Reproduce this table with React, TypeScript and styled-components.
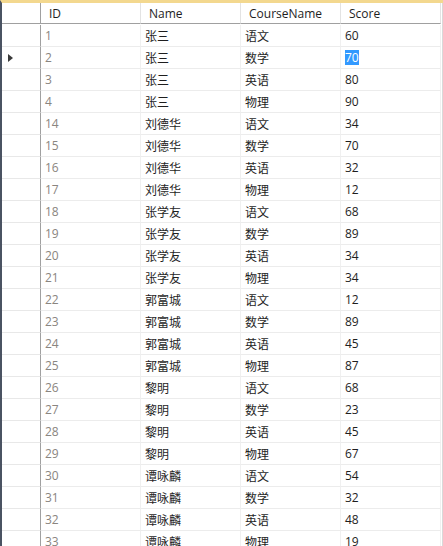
import React from "react";
import styled, { createGlobalStyle } from "styled-components";

const Global = createGlobalStyle`
  html, body { margin: 0; padding: 0; background: #ffffff; }
  body { font-family: "Open Sans", "Noto Sans CJK SC", sans-serif; }
`;

const Frame = styled.div`
  width: 443px;
  height: 546px;
  overflow: hidden;
  box-sizing: border-box;
  border-top: 3px solid #f3d88f;
  border-left: 2px solid #4a5362;
  background: #ffffff;
`;

const Grid = styled.div`
  display: grid;
  grid-template-columns: 39px 100px 100px 100px 100px;
  grid-auto-rows: 22px;
  width: 440px;
  border-right: 1px solid #d9d9d9;
`;

const HeadCorner = styled.div`
  border-right: 1px solid #a0a0a0;
  border-bottom: 1px solid #a0a0a0;
  height: 21px;
  box-sizing: border-box;
`;

const HeadCell = styled.div`
  box-sizing: border-box;
  height: 21px;
  border-right: 1px solid #e3e3e3;
  border-bottom: 1px solid #a0a0a0;
  padding-left: 8px;
  font-size: 12px;
  color: #1e1e1e;
  display: flex;
  align-items: center;
`;

const RowHead = styled.div`
  box-sizing: border-box;
  border-right: 1px solid #a0a0a0;
  border-bottom: 1px solid #e8e8e8;
  display: flex;
  align-items: center;
  padding-left: 6px;
`;

const Cell = styled.div<{ $muted?: boolean }>`
  box-sizing: border-box;
  border-right: 1px solid #f0f0f0;
  border-bottom: 1px solid #ececec;
  padding-left: 4px;
  font-size: 12px;
  color: ${(p) => (p.$muted ? "#8a8580" : "#1e1e1e")};
  display: flex;
  align-items: center;
  white-space: nowrap;
`;

const Selected = styled.span`
  background: #3399ff;
  color: #ffffff;
  line-height: 15px;
`;

const Arrow = styled.span`
  width: 0;
  height: 0;
  border-top: 4px solid transparent;
  border-bottom: 4px solid transparent;
  border-left: 5px solid #3a3a3a;
`;

const rows: [number, string, string, number][] = [
  [1, "张三", "语文", 60],
  [2, "张三", "数学", 70],
  [3, "张三", "英语", 80],
  [4, "张三", "物理", 90],
  [14, "刘德华", "语文", 34],
  [15, "刘德华", "数学", 70],
  [16, "刘德华", "英语", 32],
  [17, "刘德华", "物理", 12],
  [18, "张学友", "语文", 68],
  [19, "张学友", "数学", 89],
  [20, "张学友", "英语", 34],
  [21, "张学友", "物理", 34],
  [22, "郭富城", "语文", 12],
  [23, "郭富城", "数学", 89],
  [24, "郭富城", "英语", 45],
  [25, "郭富城", "物理", 87],
  [26, "黎明", "语文", 68],
  [27, "黎明", "数学", 23],
  [28, "黎明", "英语", 45],
  [29, "黎明", "物理", 67],
  [30, "谭咏麟", "语文", 54],
  [31, "谭咏麟", "数学", 32],
  [32, "谭咏麟", "英语", 48],
  [33, "谭咏麟", "物理", 19],
];

export default function App() {
  return (
    <>
      <Global />
      <Frame>
        <Grid>
          <HeadCorner />
          <HeadCell>ID</HeadCell>
          <HeadCell>Name</HeadCell>
          <HeadCell>CourseName</HeadCell>
          <HeadCell>Score</HeadCell>
          {rows.map(([id, name, course, score]) => (
            <React.Fragment key={id}>
              <RowHead>{id === 2 ? <Arrow /> : null}</RowHead>
              <Cell $muted>{id}</Cell>
              <Cell>{name}</Cell>
              <Cell>{course}</Cell>
              <Cell>{id === 2 ? <Selected>{score}</Selected> : score}</Cell>
            </React.Fragment>
          ))}
        </Grid>
      </Frame>
    </>
  );
}
